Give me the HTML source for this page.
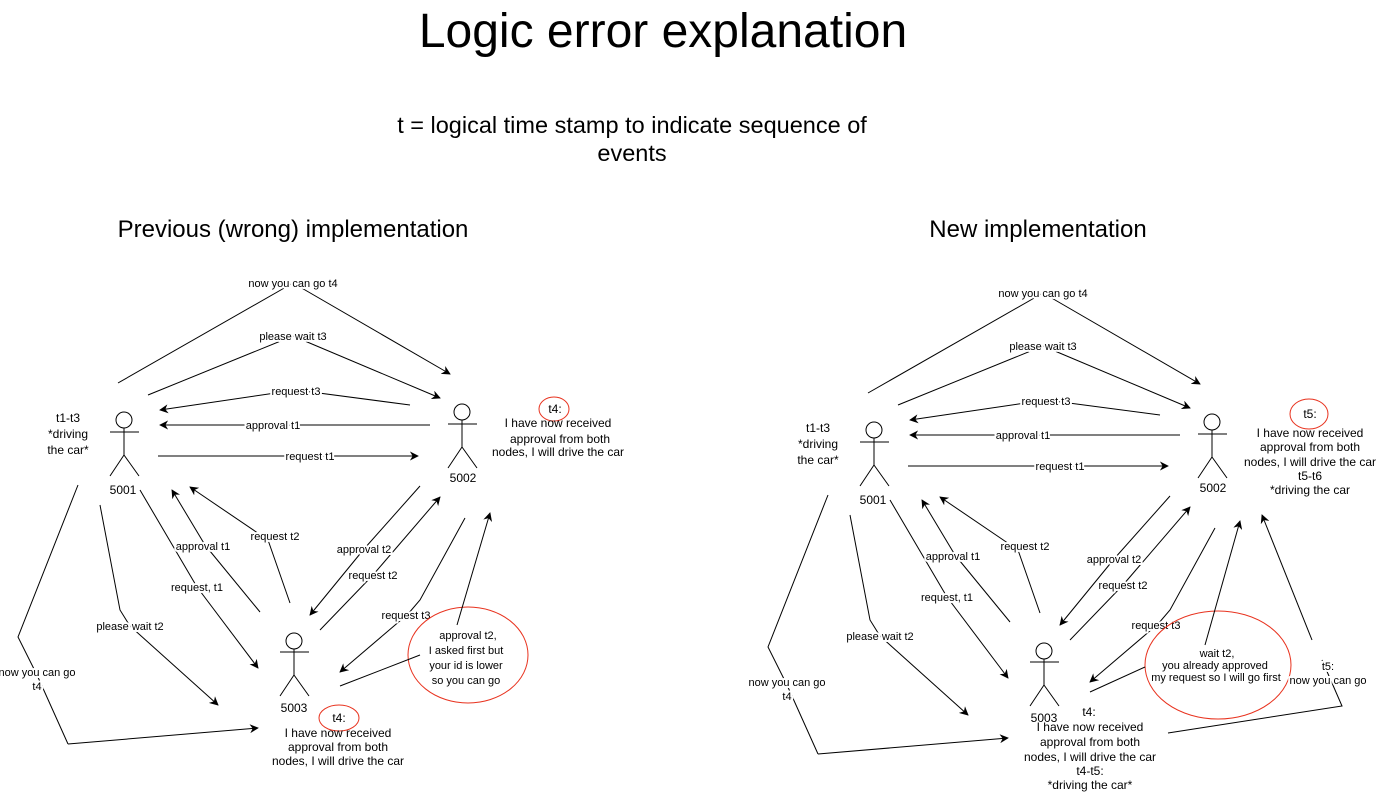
<!DOCTYPE html>
<html><head><meta charset="utf-8"><style>
html,body{margin:0;padding:0;background:#fff;}
svg{display:block;font-family:"Liberation Sans",Arial,sans-serif;}
.s{font-size:11px;text-anchor:middle;fill:#000;paint-order:stroke;stroke:#fff;stroke-width:4px;stroke-linejoin:round;}
.m{font-size:12px;text-anchor:middle;fill:#000;}
.l{stroke:#000;stroke-width:1;fill:none;}
.a{stroke:#000;stroke-width:1;fill:none;marker-end:url(#ar);}
.r{stroke:#e8321e;stroke-width:1;fill:none;}
</style></head><body>
<svg width="1380" height="793" viewBox="0 0 1380 793" xmlns="http://www.w3.org/2000/svg">
<defs>
<marker id="ar" viewBox="0 0 10 10" refX="9" refY="5" markerWidth="9" markerHeight="9" markerUnits="userSpaceOnUse" orient="auto"><path d="M0,0 L10,5 L0,10 L3,5 z" fill="#000"/></marker>
<g id="fig">
<path class="l" d="M118,383 L293,283"/><path class="a" d="M293,283 L450,374"/>
<path class="l" d="M148,395 L293,336"/><path class="a" d="M293,336 L440,398"/>
<path class="l" d="M410,405 L296,390"/><path class="a" d="M296,390 L160,410"/>
<path class="a" d="M430,425 L160,425"/>
<path class="a" d="M158,456 L418,456"/>
<path class="l" d="M290,603 L268,540"/><path class="a" d="M268,540 L190,487"/>
<path class="l" d="M260,612 L205,545"/><path class="a" d="M205,545 L172,490"/>
<path class="l" d="M140,490 L197,587"/><path class="a" d="M197,587 L258,668"/>
<path class="l" d="M100,505 L120,610 L130,626"/><path class="a" d="M130,626 L218,705"/>
<path class="l" d="M78,485 L18,637 L37,675 L68,744"/><path class="a" d="M68,744 L258,728"/>
<path class="l" d="M420,486 L364,549"/><path class="a" d="M364,549 L310,615"/>
<path class="l" d="M320,630 L373,575"/><path class="a" d="M373,575 L440,497"/>
<circle class="l" cx="124" cy="420" r="8"/><path class="l" d="M124,428 V455 M110,432 H139 M124,455 L110,476 M124,455 L139,476"/>
<text class="m" x="123" y="494">5001</text>
<text class="m" x="68" y="422">t1-t3</text><text class="m" x="68" y="438">*driving</text><text class="m" x="68" y="454">the car*</text>
<circle class="l" cx="462" cy="412" r="8"/><path class="l" d="M462,420 V447 M448,424 H477 M462,447 L448,468 M462,447 L477,468"/>
<text class="m" x="463" y="482">5002</text>
<circle class="l" cx="294" cy="641" r="8"/><path class="l" d="M294,649 V675 M280,652 H309 M294,675 L280,696 M294,675 L309,696"/>
<text class="m" x="294" y="712">5003</text>
<text class="s" x="293" y="287">now you can go t4</text>
<text class="s" x="293" y="340">please wait t3</text>
<text class="s" x="296" y="395">request t3</text>
<text class="s" x="273" y="429">approval t1</text>
<text class="s" x="310" y="460">request t1</text>
<text class="s" x="275" y="540">request t2</text>
<text class="s" x="203" y="550">approval t1</text>
<text class="s" x="197" y="591">request, t1</text>
<text class="s" x="130" y="630">please wait t2</text>
<text class="s" x="37" y="676">now you can go</text><text class="s" x="37" y="690">t4</text>
<text class="s" x="364" y="553">approval t2</text>
<text class="s" x="373" y="579">request t2</text>
</g>
</defs>

<text x="663" y="47" font-size="48" text-anchor="middle">Logic error explanation</text>
<text x="632" y="133" font-size="23.5" text-anchor="middle">t = logical time stamp to indicate sequence of</text>
<text x="632" y="161" font-size="23.5" text-anchor="middle">events</text>
<text x="293" y="237" font-size="24" text-anchor="middle">Previous (wrong) implementation</text>
<text x="1038" y="237" font-size="24" text-anchor="middle">New implementation</text>

<use href="#fig"/>
<path class="l" d="M465,518 L420,600 L408,614"/><path class="a" d="M408,614 L340,672"/>
<text class="s" x="406" y="619">request t3</text>
<ellipse class="r" cx="468" cy="655" rx="60" ry="48"/>
<path class="l" d="M340,686 L420,655"/><path class="a" d="M457,625 L490,513"/>
<text class="m" style="font-size:11px" x="468" y="639">approval t2,</text>
<text class="m" style="font-size:11px" x="466" y="654">I asked first but</text>
<text class="m" style="font-size:11px" x="466" y="669">your id is lower</text>
<text class="m" style="font-size:11px" x="466" y="684">so you can go</text>
<ellipse class="r" cx="554" cy="409" rx="15" ry="12"/>
<text class="m" x="555" y="413">t4:</text>
<text class="m" x="558" y="427">I have now received</text>
<text class="m" x="560" y="443">approval from both</text>
<text class="m" x="558" y="456">nodes, I will drive the car</text>
<ellipse class="r" cx="339" cy="718" rx="20" ry="13"/>
<text class="m" x="339" y="722">t4:</text>
<text class="m" x="338" y="737">I have now received</text>
<text class="m" x="338" y="751">approval from both</text>
<text class="m" x="338" y="765">nodes, I will drive the car</text>

<g transform="translate(750,10)"><use href="#fig"/></g>
<path class="l" d="M1215,528 L1170,610 L1158,624"/><path class="a" d="M1158,624 L1090,682"/>
<text class="s" x="1156" y="629">request t3</text>
<ellipse class="r" cx="1218" cy="665" rx="73" ry="54"/>
<path class="l" d="M1090,692 L1145,667"/><path class="a" d="M1205,645 L1240,521"/>
<path class="l" d="M1168,733 L1342,706 L1322,660"/><path class="a" d="M1312,640 L1262,515"/>
<text class="s" x="1328" y="670">t5:</text><text class="s" x="1328" y="684">now you can go</text>
<text class="m" style="font-size:11px" x="1217" y="657">wait t2,</text>
<text class="m" style="font-size:11px" x="1215" y="669">you already approved</text>
<text class="m" style="font-size:11px" x="1216" y="681">my request so I will go first</text>
<ellipse class="r" cx="1309" cy="414" rx="19" ry="15"/>
<text class="m" x="1310" y="418">t5:</text>
<text class="m" x="1310" y="437">I have now received</text>
<text class="m" x="1310" y="451">approval from both</text>
<text class="m" x="1310" y="466">nodes, I will drive the car</text>
<text class="m" x="1310" y="480">t5-t6</text>
<text class="m" x="1310" y="494">*driving the car</text>
<text class="m" x="1089" y="716">t4:</text>
<text class="m" x="1090" y="731">I have now received</text>
<text class="m" x="1090" y="746">approval from both</text>
<text class="m" x="1090" y="761">nodes, I will drive the car</text>
<text class="m" x="1090" y="775">t4-t5:</text>
<text class="m" x="1090" y="789">*driving the car*</text>
</svg>
</body></html>
